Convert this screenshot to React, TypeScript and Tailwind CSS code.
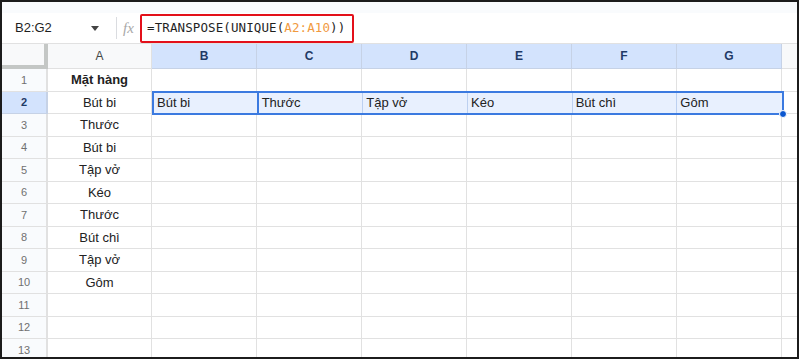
import React from 'react';

const rows: string[] = ['Mặt hàng', 'Bút bi', 'Thước', 'Bút bi', 'Tập vở', 'Kéo', 'Thước', 'Bút chì', 'Tập vở', 'Gôm', '', '', ''];
const cols = ['B', 'C', 'D', 'E', 'F', 'G'];
const transposed = ['Bút bi', 'Thước', 'Tập vở', 'Kéo', 'Bút chì', 'Gôm'];

const App = () => {
  return (
    <div className="w-[800px] h-[361px] bg-white" style={{ fontFamily: '"Liberation Sans", Arial, sans-serif' }}>
      <div className="w-[799px] h-[359px] border-2 border-[#1c1c1c] overflow-hidden flex flex-col bg-white">
        {/* top strip */}
        <div className="h-[11px] bg-[#f9fbfd] shrink-0" />

        {/* formula bar */}
        <div className="h-[31px] flex items-center border-b border-[#e1e1e1] shrink-0">
          <div className="w-[114px] flex items-center justify-between pl-[13px] pr-[17px]">
            <span className="text-[13px] text-[#1f1f1f]">B2:G2</span>
            <span className="w-0 h-0 border-l-[4px] border-r-[4px] border-t-[5px] border-l-transparent border-r-transparent border-t-[#444]" />
          </div>
          <div className="w-px h-[22px] bg-[#dadce0]" />
          <span className="ml-[6px] w-[17px] text-[15px] italic text-[#a8a8a8]" style={{ fontFamily: '"Liberation Serif", serif' }}>fx</span>
          <div className="h-[29px] w-[214px] border-2 border-[#e3101a] rounded-[2px] flex items-center pl-[5px]">
            <span className="text-[12.5px] text-[#1f1f1f] tracking-[0.1px]" style={{ fontFamily: '"DejaVu Sans Mono", "Liberation Mono", monospace' }}>
              =TRANSPOSE(UNIQUE(<span className="text-[#f19a3e]">A2:A10</span>))
            </span>
          </div>
        </div>

        {/* column headers */}
        <div className="h-[25px] flex shrink-0 text-[12px] font-bold">
          <div className="w-[46px] bg-[#f8f9fa] border-r-[4px] border-b-[4px] border-[#c4c7c5] shrink-0" />
          <div className="w-[104px] bg-[#f8f9fa] border-r border-b border-[#e1e1e1] flex items-center justify-center text-[#444746] font-normal">A</div>
          {cols.map((c) => (
            <div key={c} className="w-[105px] bg-[#d3e3fd] border-r border-b border-[#c6d2e6] flex items-center justify-center text-[#1f3a66]">{c}</div>
          ))}
          <div className="flex-1 bg-[#f8f9fa] border-b border-[#e1e1e1]" />
        </div>

        {/* rows */}
        {rows.map((val, i) => {
          const n = i + 1;
          const sel = n === 2;
          return (
            <div key={n} className="h-[22.5px] flex shrink-0 text-[13px]">
              <div className={`w-[46px] shrink-0 border-r-[2px] border-b flex items-center justify-center text-[11px] ${sel ? 'bg-[#d3e3fd] border-[#c6d2e6] text-[#1f3a66] font-bold' : 'bg-[#f9fbfd] border-[#e1e1e1] text-[#707070]'}`}>{n}</div>
              <div className={`w-[104px] shrink-0 border-r border-b border-[#e1e1e1] flex items-center justify-center text-[#222] ${n === 1 ? 'font-bold' : ''}`}>{val}</div>
              {sel ? (
                <div className="relative flex bg-[#e8f0fe] border-2 border-[#3b7ae0] -mt-px h-[24px] w-[632px]">
                  {transposed.map((t, j) => (
                    <div key={j} className={`w-[105px] flex items-center pl-[3px] text-[#222] ${j < 5 ? 'border-r border-[#bcd0f0]' : ''} ${j === 0 ? 'border-r-2 border-r-[#3b7ae0]' : ''}`}>{t}</div>
                  ))}
                  <span className="absolute -right-[5px] -bottom-[5px] w-[8px] h-[8px] rounded-full bg-[#0b57d0] border border-white" />
                </div>
              ) : (
                cols.map((c) => <div key={c} className="w-[105px] shrink-0 border-r border-b border-[#e1e1e1]" />)
              )}
              <div className="flex-1 border-b border-[#e1e1e1]" />
            </div>
          );
        })}
      </div>
    </div>
  );
};

export default App;
